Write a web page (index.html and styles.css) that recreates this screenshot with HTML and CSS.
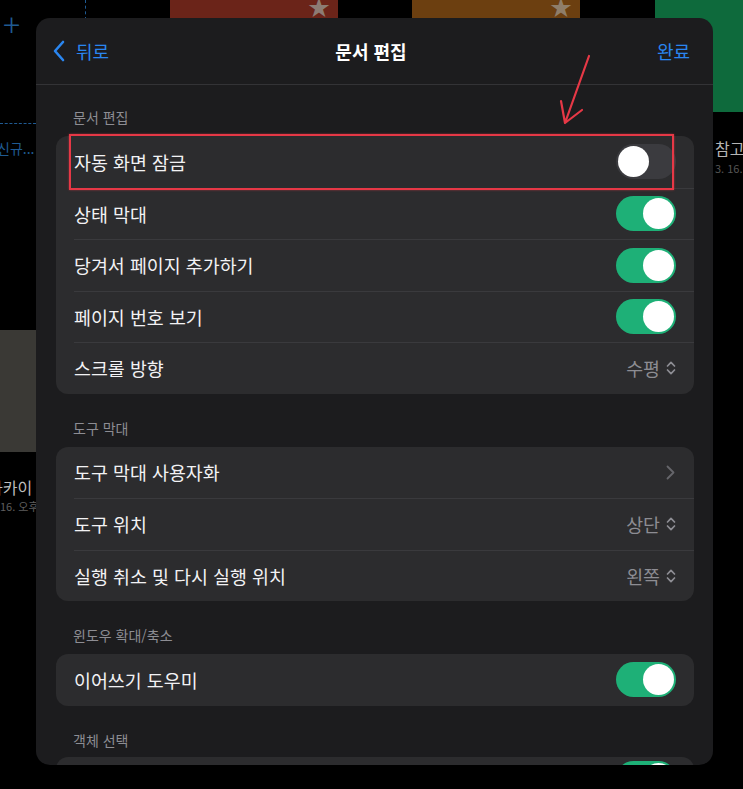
FILE: index.html
```html
<!DOCTYPE html>
<html lang="ko">
<head>
  <meta charset="UTF-8">
  <meta name="viewport" content="width=device-width, initial-scale=1.0">
  <title>문서 편집</title>
  <link rel="stylesheet" href="styles.css">
</head>
<body>
  <!-- dimmed documents behind the sheet -->
  <div class="behind">
    <span class="plus">+</span>
    <span class="dash-v"></span>
    <span class="dash-h"></span>
    <span class="new-doc">신규...</span>
    <span class="thumb-grey"></span>
    <span class="left-title">라카이</span>
    <span class="left-date">16. 오후</span>
    <div class="cover red"><span class="star">★</span></div>
    <div class="cover orange"><span class="star">★</span></div>
    <div class="cover green"></div>
    <span class="right-title">참고</span>
    <span class="right-date">3. 16.</span>
  </div>

  <section class="sheet">
    <header class="nav">
      <a href="#" class="back">
        <svg width="14" height="22" viewBox="0 0 14 22"><path d="M11 2 L3 11 L11 20" fill="none" stroke="currentColor" stroke-width="2.6" stroke-linecap="round" stroke-linejoin="round"/></svg>
        뒤로
      </a>
      <h1>문서 편집</h1>
      <a href="#" class="done">완료</a>
    </header>

    <div class="content">
      <h2 class="label">문서 편집</h2>
      <div class="group">
        <div class="row"><span>자동 화면 잠금</span><span class="toggle"></span></div>
        <div class="row"><span>상태 막대</span><span class="toggle on"></span></div>
        <div class="row"><span>당겨서 페이지 추가하기</span><span class="toggle on"></span></div>
        <div class="row"><span>페이지 번호 보기</span><span class="toggle on"></span></div>
        <div class="row"><span>스크롤 방향</span><span class="value">수평 <svg class="updown" width="10" height="16" viewBox="0 0 10 16"><path d="M1.5 6 L5 2.3 L8.5 6 M1.5 10 L5 13.7 L8.5 10" fill="none" stroke="currentColor" stroke-width="1.7" stroke-linecap="round" stroke-linejoin="round"/></svg></span></div>
      </div>

      <h2 class="label">도구 막대</h2>
      <div class="group">
        <div class="row"><span>도구 막대 사용자화</span><svg class="more" width="9" height="15" viewBox="0 0 9 15"><path d="M1.5 1.5 L7.5 7.5 L1.5 13.5" fill="none" stroke="currentColor" stroke-width="1.8" stroke-linecap="round" stroke-linejoin="round"/></svg></div>
        <div class="row"><span>도구 위치</span><span class="value">상단 <svg class="updown" width="10" height="16" viewBox="0 0 10 16"><path d="M1.5 6 L5 2.3 L8.5 6 M1.5 10 L5 13.7 L8.5 10" fill="none" stroke="currentColor" stroke-width="1.7" stroke-linecap="round" stroke-linejoin="round"/></svg></span></div>
        <div class="row"><span>실행 취소 및 다시 실행 위치</span><span class="value">왼쪽 <svg class="updown" width="10" height="16" viewBox="0 0 10 16"><path d="M1.5 6 L5 2.3 L8.5 6 M1.5 10 L5 13.7 L8.5 10" fill="none" stroke="currentColor" stroke-width="1.7" stroke-linecap="round" stroke-linejoin="round"/></svg></span></div>
      </div>

      <h2 class="label">윈도우 확대/축소</h2>
      <div class="group">
        <div class="row"><span>이어쓰기 도우미</span><span class="toggle on"></span></div>
      </div>

      <h2 class="label">객체 선택</h2>
      <div class="group last">
        <div class="row"><span></span><span class="toggle on"></span></div>
      </div>
    </div>
  </section>

  <!-- red annotation drawn on the screenshot -->
  <div class="mark-box"></div>
  <svg class="mark-arrow" width="743" height="789" viewBox="0 0 743 789">
    <path d="M589 56 L565 123 M561 101 L565 123 L582 110" fill="none" stroke="#e63846" stroke-width="2.2" stroke-linecap="round" stroke-linejoin="round"/>
  </svg>
</body>
</html>
```

FILE: styles.css
```css
:root {
  --sheet: #1c1c1e;
  --cell: #2c2c2e;
  --line: #3a3a3d;
  --text: #f2f2f4;
  --muted: #8d8d93;
  --blue: #2a86f0;
  --green: #1eb077;
  --red: #e63846;
}
* { box-sizing: border-box; }
body {
  margin: 0;
  width: 743px;
  height: 789px;
  overflow: hidden;
  position: relative;
  background: #000;
  font-family: "Noto Sans CJK KR", "Noto Sans", sans-serif;
  color: var(--text);
}
a { text-decoration: none; color: inherit; }

/* Background documents */
.behind { position: absolute; inset: 0; }
.behind > * { position: absolute; white-space: nowrap; line-height: 1.2; }
.plus { left: 3px; top: 7px; font-size: 32px; font-weight: 300; color: #1f5a92; line-height: 1; }
.dash-v { left: 85px; top: 0; height: 20px; border-left: 1px dashed #1f5a92; }
.dash-h { left: 0; top: 123px; width: 36px; border-top: 1px dashed #1f5a92; }
.new-doc { left: -3px; top: 140px; font-size: 14px; color: #1f5a92; }
.thumb-grey { left: 0; top: 330px; width: 36px; height: 122px; background: #3a3935; }
.left-title { left: -12px; top: 478px; font-size: 16px; color: #bdbdbd; }
.left-date { left: 0; top: 500px; font-size: 11px; color: #5e5e5e; }
.cover { top: 0; height: 18px; }
.cover.red { left: 170px; width: 168px; background: #6b2419; }
.cover.orange { left: 412px; width: 168px; background: #6c3f10; }
.cover.green { left: 655px; width: 88px; height: 112px; background: #0e6a3c; }
.star { position: absolute; right: 8px; top: -6px; font-size: 22px; color: #8c7c74; line-height: 1; }
.cover.orange .star { color: #8f7e6a; }
.right-title { left: 715px; top: 139px; font-size: 16px; color: #b5b5b5; }
.right-date { left: 715px; top: 162px; font-size: 11px; color: #555; }

/* Sheet */
.sheet {
  position: absolute;
  left: 36px; top: 18px;
  width: 677px; height: 747px;
  background: var(--sheet);
  border-radius: 14px;
  overflow: hidden;
}
.nav {
  height: 67px;
  border-bottom: 1px solid #333336;
  display: grid;
  grid-template-columns: 1fr auto 1fr;
  align-items: center;
  padding: 0 23px 0 16px;
}
.nav h1 { margin: 0; font-size: 18px; font-weight: 600; color: #fff; }
.back { display: flex; align-items: center; gap: 10px; color: var(--blue); font-size: 18px; }
.done { justify-self: end; color: var(--blue); font-size: 18px; }

.content { padding: 0 19px 0 20px; }
.label {
  margin: 26px 0 11px 17px;
  font-size: 14px;
  line-height: 16px;
  font-weight: 400;
  color: var(--muted);
}
.label:first-child { margin-top: 24px; }
.group { background: var(--cell); border-radius: 12px; overflow: hidden; }
.group.last { margin-top: -2px; }
.row {
  height: 51.5px;
  margin-left: 18px;
  padding-right: 18px;
  display: flex;
  align-items: center;
  justify-content: space-between;
  font-size: 18.4px;
}
.row + .row { border-top: 1px solid var(--line); }
.group.last .row { align-items: flex-start; padding-top: 4px; }

.toggle {
  width: 60px; height: 35px;
  border-radius: 18px;
  background: #3b3b3f;
  position: relative;
}
.toggle::after {
  content: "";
  position: absolute;
  left: 2px; top: 2px;
  width: 31px; height: 31px;
  border-radius: 50%;
  background: #fff;
}
.toggle.on { background: var(--green); }
.toggle.on::after { left: 27px; }

.value { display: flex; align-items: center; gap: 6px; color: var(--muted); }
.updown { color: var(--muted); }
.more { color: #66666b; margin-right: 1px; }

/* Annotation */
.mark-box {
  position: absolute;
  left: 69px; top: 134px;
  width: 605px; height: 56px;
  border: 2px solid var(--red);
  box-shadow: 0 0 2px rgba(230, 56, 70, 0.6);
}
.mark-arrow { position: absolute; left: 0; top: 0; pointer-events: none; }
```
